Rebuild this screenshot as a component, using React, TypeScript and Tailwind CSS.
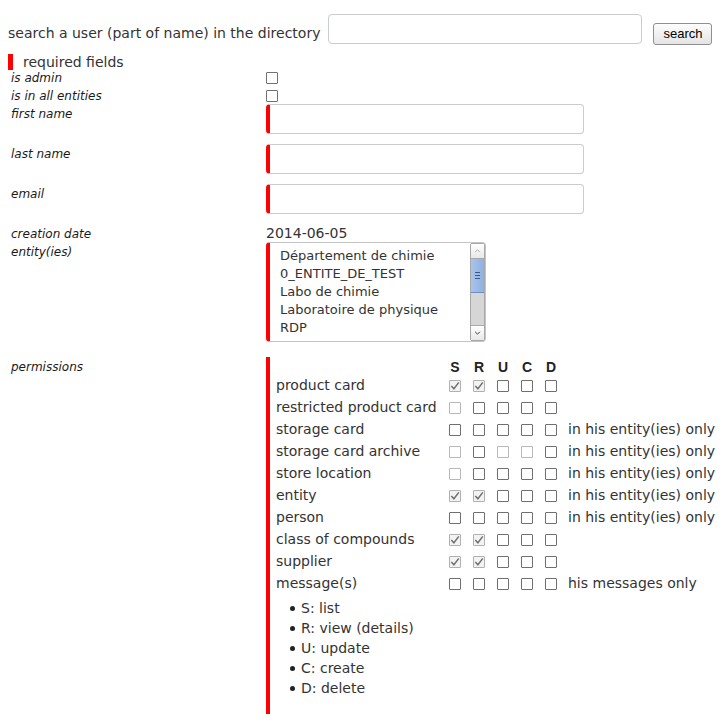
import React from "react";

type BoxState = "n" | "d" | "c";

type Perm = {
  label: string;
  boxes: BoxState[];
  note?: string;
};

const perms: Perm[] = [
  { label: "product card", boxes: ["c", "c", "n", "n", "n"] },
  { label: "restricted product card", boxes: ["d", "n", "n", "n", "n"] },
  { label: "storage card", boxes: ["n", "n", "n", "n", "n"], note: "in his entity(ies) only" },
  { label: "storage card archive", boxes: ["d", "n", "d", "d", "n"], note: "in his entity(ies) only" },
  { label: "store location", boxes: ["d", "n", "n", "n", "n"], note: "in his entity(ies) only" },
  { label: "entity", boxes: ["c", "c", "n", "n", "n"], note: "in his entity(ies) only" },
  { label: "person", boxes: ["n", "n", "n", "n", "n"], note: "in his entity(ies) only" },
  { label: "class of compounds", boxes: ["c", "c", "n", "n", "n"] },
  { label: "supplier", boxes: ["c", "c", "n", "n", "n"] },
  { label: "message(s)", boxes: ["n", "n", "n", "n", "n"], note: "his messages only" },
];

const entities = [
  "Département de chimie",
  "0_ENTITE_DE_TEST",
  "Labo de chimie",
  "Laboratoire de physique",
  "RDP",
];

const legend = ["S: list", "R: view (details)", "U: update", "C: create", "D: delete"];

function Box({ state }: { state: BoxState }) {
  if (state === "c") {
    return (
      <span className="flex h-[12px] w-[12px] items-center justify-center rounded-[1px] border border-[#b0b0b0] bg-[#f3f3f3]">
        <svg viewBox="0 0 10 10" className="h-[10px] w-[10px]">
          <path d="M1.3 5 L3.9 7.8 L8.8 1.4" fill="none" stroke="#707070" strokeWidth="1.5" />
        </svg>
      </span>
    );
  }
  return (
    <span
      className={
        state === "d"
          ? "block h-[12px] w-[12px] rounded-[1px] border border-[#b8b8b8] bg-white"
          : "block h-[12px] w-[12px] rounded-[1px] border border-[#707070] bg-white"
      }
    />
  );
}

function Label({ children, top }: { children: React.ReactNode; top: string }) {
  return <div className={"pl-[3px] text-[12px] italic leading-[14px] text-[#1a1a1a] " + top}>{children}</div>;
}

function TextField() {
  return (
    <input
      type="text"
      className="h-[30px] w-[318px] rounded-[4px] border border-[#cccccc] border-l-4 border-l-[#ff0000] bg-white"
    />
  );
}

export default function App() {
  return (
    <div className="min-h-[722px] w-[726px] bg-white pl-[8px] font-['DejaVu_Sans',sans-serif] text-[14px] text-[#333]">
      <div className="flex items-start">
        <span className="mt-[23px] leading-[20px]">search a user (part of name) in the directory</span>
        <input
          type="text"
          className="ml-[8px] mt-[14px] h-[30px] w-[314px] rounded-[4px] border border-[#cccccc] bg-white"
        />
        <button
          type="button"
          className="ml-[11px] mt-[23px] h-[22px] w-[59px] rounded-[3px] border border-[#8f8f8f] bg-gradient-to-b from-[#fdfdfd] to-[#e4e4e4] font-['Liberation_Sans',sans-serif] text-[13px] leading-[20px] text-black"
        >
          search
        </button>
      </div>

      <div className="mt-[8px] flex items-center">
        <span className="block h-[16px] w-[5px] bg-[#ff0000]" />
        <span className="ml-[10px] leading-[18px]">required fields</span>
      </div>

      <div className="grid grid-cols-[258px_1fr]">
        <div className="h-[18px]">
          <Label top="pt-0">is admin</Label>
        </div>
        <div className="h-[18px] pt-[1px]">
          <Box state="n" />
        </div>

        <div className="h-[15px]">
          <Label top="pt-0">is in all entities</Label>
        </div>
        <div className="h-[15px] pt-[1px]">
          <Box state="n" />
        </div>

        <Label top="pt-[3px]">first name</Label>
        <div className="h-[40px]">
          <TextField />
        </div>

        <Label top="pt-[3px]">last name</Label>
        <div className="h-[40px]">
          <TextField />
        </div>

        <Label top="pt-[3px]">email</Label>
        <div className="h-[40px]">
          <TextField />
        </div>

        <Label top="pt-[3px]">creation date</Label>
        <div className="h-[18px] leading-[18px]">2014-06-05</div>

        <Label top="pt-[3px]">entity(ies)</Label>
        <div className="pb-[15px]">
          <div className="flex h-[100px] w-[220px] rounded-[4px] border border-[#c4c4c4] border-l-4 border-l-[#ff0000] bg-white">
            <div className="flex-1 pl-[10px] pt-[4px] text-[13px] leading-[18px] text-[#333]">
              {entities.map((e) => (
                <div key={e} className="whitespace-nowrap">
                  {e}
                </div>
              ))}
            </div>
            <div className="flex w-[15px] flex-col rounded-[2px] border border-[#a8a8a8] bg-[#d6d6d6]">
              <div className="flex h-[15px] items-center justify-center border-b border-[#a8a8a8] bg-gradient-to-b from-white to-[#e8e8e8]">
                <svg viewBox="0 0 8 5" className="h-[4px] w-[7px]">
                  <path d="M1 4 L4 1 L7 4" fill="none" stroke="#9a9a9a" strokeWidth="1" />
                </svg>
              </div>
              <div className="flex h-[34px] flex-col items-center justify-center gap-[2px] border-b border-[#6f8fc4] bg-gradient-to-r from-[#a9c4ec] to-[#8fb0e0]">
                <span className="block h-[1px] w-[5px] bg-[#3b5a8c]" />
                <span className="block h-[1px] w-[5px] bg-[#3b5a8c]" />
                <span className="block h-[1px] w-[5px] bg-[#3b5a8c]" />
              </div>
              <div className="flex-1" />
              <div className="flex h-[15px] items-center justify-center border-t border-[#a8a8a8] bg-gradient-to-b from-white to-[#e8e8e8]">
                <svg viewBox="0 0 8 5" className="h-[4px] w-[7px]">
                  <path d="M1 1 L4 4 L7 1" fill="none" stroke="#333" strokeWidth="1.2" />
                </svg>
              </div>
            </div>
          </div>
        </div>

        <Label top="pt-[3px]">permissions</Label>
        <div className="border-l-4 border-[#ff0000] pb-[16px] pl-[6px]">
          <div className="grid grid-cols-[167px_24px_24px_24px_24px_24px_auto] items-center">
            <div className="h-[17px]" />
            {["S", "R", "U", "C", "D"].map((h) => (
              <div
                key={h}
                className="h-[17px] pt-[4px] text-center font-['Liberation_Sans',sans-serif] text-[14px] font-bold leading-[13px] text-[#222]"
              >
                {h}
              </div>
            ))}
            <div />
            {perms.map((p) => (
              <React.Fragment key={p.label}>
                <div className="h-[22px] whitespace-nowrap leading-[22px]">{p.label}</div>
                {p.boxes.map((b, i) => (
                  <div key={i} className="flex h-[22px] items-center justify-center pt-[1px]">
                    <Box state={b} />
                  </div>
                ))}
                <div className="whitespace-nowrap pl-[5px] leading-[22px]">{p.note ?? ""}</div>
              </React.Fragment>
            ))}
          </div>
          <ul className="mt-[4px] pl-[14px]">
            {legend.map((l) => (
              <li key={l} className="flex h-[20px] items-center">
                <span className="mr-[6px] block h-[5px] w-[5px] rounded-full bg-[#222]" />
                <span>{l}</span>
              </li>
            ))}
          </ul>
        </div>
      </div>
    </div>
  );
}
